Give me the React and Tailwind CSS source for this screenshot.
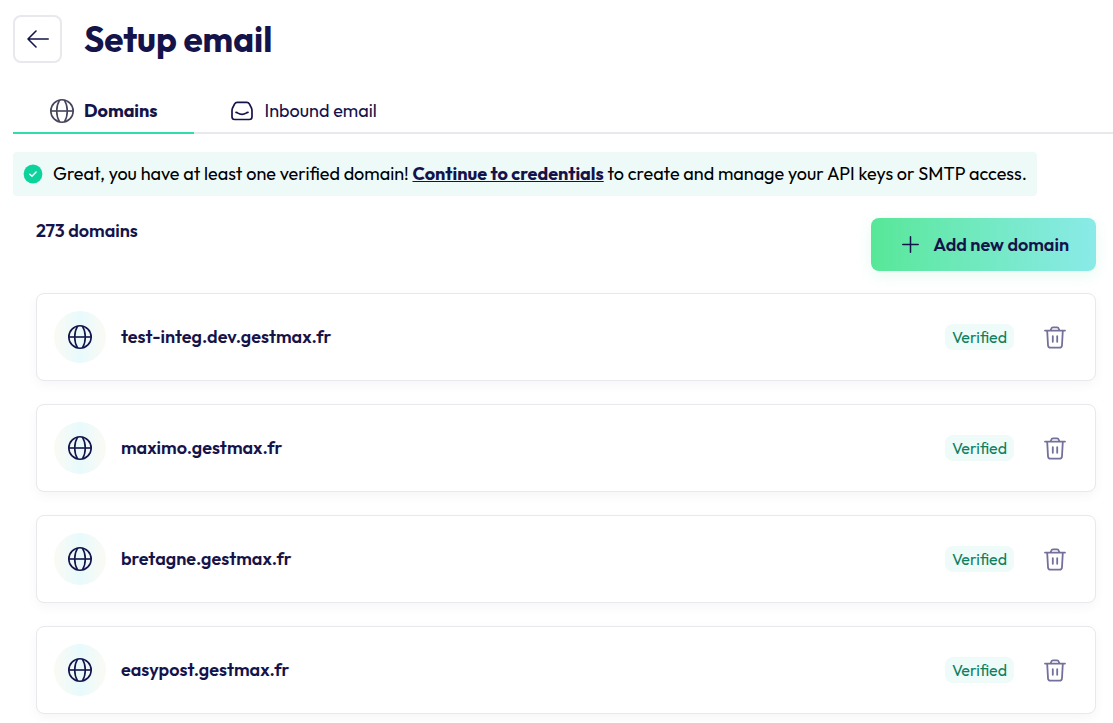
import { useState } from "react";

const initialDomains = [
  "test-integ.dev.gestmax.fr",
  "maximo.gestmax.fr",
  "bretagne.gestmax.fr",
  "easypost.gestmax.fr",
];

function GlobeIcon({ className }) {
  return (
    <svg
      viewBox="0 0 24 24"
      className={className}
      fill="none"
      stroke="currentColor"
      strokeWidth="1.6"
      aria-hidden="true"
    >
      <circle cx="12" cy="12" r="11.2" />
      <path d="M0.8 12h22.4" />
      <path d="M9.6 1.2C7.6 4.4 6.7 8 6.7 12s.9 7.6 2.9 10.8" />
      <path d="M14.4 1.2c2 3.2 2.9 6.8 2.9 10.8s-.9 7.6-2.9 10.8" />
    </svg>
  );
}

function InboxIcon() {
  return (
    <svg
      viewBox="0 0 22 20"
      className="w-[22px] h-5"
      fill="none"
      stroke="currentColor"
      strokeWidth="1.7"
      strokeLinecap="round"
      strokeLinejoin="round"
      aria-hidden="true"
    >
      <path d="M6.3 1.4h9.4c1.2 0 2.2.6 2.8 1.7l2 4.1c.4.9.5 1.7.5 2.7v5.900c0 1.700-1 2.700-2.700 2.700H3.700C2 18.500 1 17.500 1 15.800V9.900c0-1 .1-1.800.5-2.700l2-4.100C4.100 2 5.100 1.400 6.300 1.400z" />
      <path d="M5 11.300c.9 0 1.400.3 2 .8 1.200.9 2.500 1.300 4 1.300s2.800-.4 4-1.300c.6-.5 1.100-.8 2-.8" />
    </svg>
  );
}

function TrashIcon() {
  return (
    <svg
      viewBox="0 0 22 23"
      className="w-[22px] h-[23px]"
      fill="none"
      stroke="currentColor"
      strokeWidth="1.8"
      strokeLinecap="round"
      strokeLinejoin="round"
      aria-hidden="true"
    >
      <path d="M1 4.6h20" />
      <path d="M6.7 4.2l.5-1.5C7.5 1.7 8 1.3 9 1.3h4c1 0 1.5.4 1.8 1.4l.5 1.5" />
      <path d="M3.2 4.8l.8 14.4c.1 1.6 1 2.5 2.6 2.5h8.800c1.600 0 2.500-.9 2.600-2.500l.8-14.400" />
      <path d="M8.800 10.200v5.600M13.200 10.200v5.600" />
    </svg>
  );
}

function DomainCard({ name, onDelete }) {
  return (
    <li className="flex items-center h-[88px] pl-[17px] pr-[29px] bg-white border border-[#e8e8ed] rounded-lg shadow-[0_4px_12px_rgba(20,20,70,0.04)]">
      <div className="flex items-center justify-center size-[52px] shrink-0 rounded-full bg-linear-to-r from-[#fbfaf4] via-[#e8fafd] to-[#fbfaf4]">
        <GlobeIcon className="size-6" />
      </div>

      <h2 className="ml-[15px] text-lg font-semibold">{name}</h2>

      <span className="ml-auto px-[7px] h-[26px] leading-[26px] rounded-lg bg-[#eefbf9] text-[#0e8060] text-base">
        Verified
      </span>

      <button
        type="button"
        aria-label={`Delete ${name}`}
        onClick={onDelete}
        className="ml-[30px] text-[#73709a] cursor-pointer"
      >
        <TrashIcon />
      </button>
    </li>
  );
}

export default function App() {
  const [tab, setTab] = useState("domains");
  const [domains, setDomains] = useState(initialDomains);

  const handleDelete = (name) => {
    setDomains(domains.filter((d) => d !== name));
  };

  return (
    <div className="pt-[15px] pl-[13px] pb-2 bg-white text-[#14134a] font-['Outfit','Lato',sans-serif]">

      <header className="flex items-center gap-[22px]">
        <button
          type="button"
          aria-label="Back"
          className="flex items-center justify-center w-[49px] h-12 border-2 border-[#e8e8ed] rounded-lg cursor-pointer"
        >
          <svg
            viewBox="0 0 22 18"
            className="w-[22px] h-[18px]"
            fill="none"
            stroke="currentColor"
            strokeWidth="1.6"
            strokeLinecap="round"
            strokeLinejoin="round"
            aria-hidden="true"
          >
            <path d="M21.2 9H1M9 1L1 9l8 8" />
          </svg>
        </button>
        <h1 className="text-[35px] leading-[48px] font-bold">Setup email</h1>
      </header>

      <nav className="flex mt-[27px] h-11 shadow-[inset_0_-2px_0_#e8e8ed]">
        <button
          type="button"
          onClick={() => setTab("domains")}
          className={`flex items-center gap-[10px] pl-[37px] pr-9 border-b-2 text-lg cursor-pointer ${
            tab === "domains" ? "border-[#34dbac] font-bold" : "border-transparent"
          }`}
        >
          <GlobeIcon className="size-6 text-[#44445a]" />
          Domains
        </button>
        <button
          type="button"
          onClick={() => setTab("inbound")}
          className={`flex items-center gap-3 pl-[37px] pr-9 border-b-2 text-lg cursor-pointer ${
            tab === "inbound" ? "border-[#34dbac] font-bold" : "border-transparent"
          }`}
        >
          <InboxIcon />
          Inbound email
        </button>
      </nav>

      <div className="flex items-center w-fit mt-[18px] min-h-11 px-[10px] rounded bg-[#eefaf8] text-black">
        <svg viewBox="0 0 20 20" className="size-5 shrink-0" aria-hidden="true">
          <circle cx="10" cy="10" r="9.4" fill="#0bd39b" />
          <path
            d="M6.8 10.2l2.2 2.1 4.1-4.4"
            fill="none"
            stroke="#fff"
            strokeWidth="1.4"
            strokeLinecap="round"
            strokeLinejoin="round"
          />
        </svg>
        <p className="ml-[10px] text-lg">
          Great, you have at least one verified domain!{" "}
          <a href="#credentials" className="font-bold text-[#14134a] underline">
            Continue to credentials
          </a>{" "}
          to create and manage your API keys or SMTP access.
        </p>
      </div>

      <main className="mt-[22px] pl-[23px] pr-[17px]">
        <div className="flex items-start justify-between">
          <p className="text-lg leading-[26px] font-semibold">273 domains</p>
          <button
            type="button"
            className="flex items-center gap-[14px] h-[53px] pl-[31px] pr-[27px] rounded-lg bg-linear-to-r from-[#57e798] to-[#8aeae8] text-lg font-semibold shadow-[0_4px_16px_rgba(52,219,130,0.12)] cursor-pointer"
          >
            <svg
              viewBox="0 0 17 17"
              className="size-[17px]"
              fill="none"
              stroke="currentColor"
              strokeWidth="1.5"
              strokeLinecap="round"
              aria-hidden="true"
            >
              <path d="M8.5 .8v15.4M.8 8.5h15.4" />
            </svg>
            Add new domain
          </button>
        </div>

        <ul className="flex flex-col gap-[23px] mt-[22px]">
          {domains.map((name) => (
            <DomainCard
              key={name}
              name={name}
              onDelete={() => handleDelete(name)}
            />
          ))}
        </ul>
      </main>

    </div>
  );
}
